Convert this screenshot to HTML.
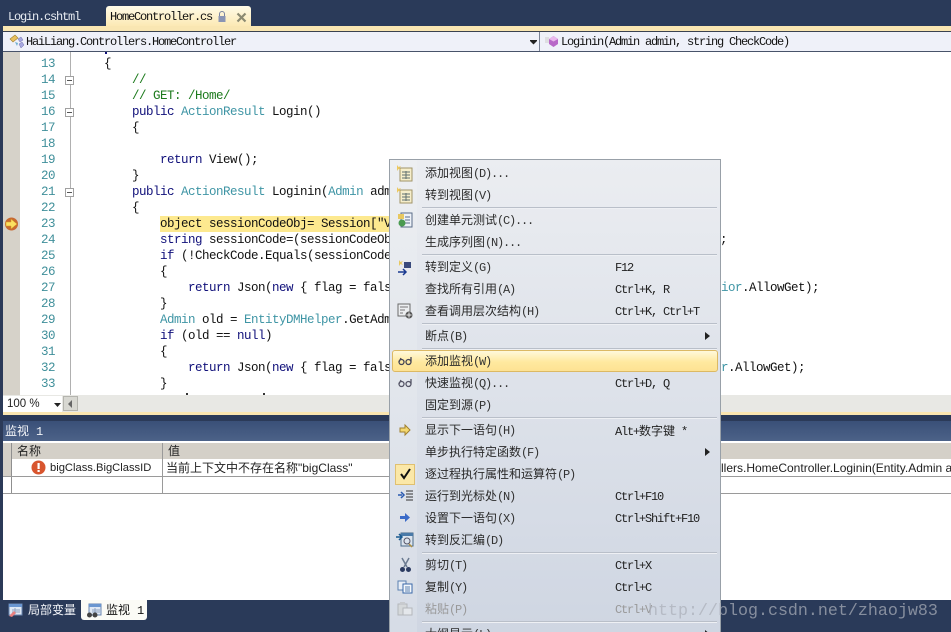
<!DOCTYPE html>
<html style="height:632px;overflow:hidden"><head><meta charset="utf-8"><style>
html,body{margin:0;padding:0}
body{width:951px;height:632px;overflow:hidden;position:relative;background:#2b3a58;font-family:"Liberation Sans","Noto Sans CJK SC",sans-serif}
div,span.a{position:absolute}
.m{font-family:"Liberation Mono","Noto Sans CJK SC",monospace;font-size:12px;letter-spacing:-1.2px;line-height:16px;color:#111;white-space:pre}
.c{position:absolute;font-family:"Liberation Mono",monospace;font-size:12.5px;letter-spacing:-.5px;line-height:16px;height:16px;white-space:pre;color:#111}
.n{position:absolute;left:22px;width:33px;text-align:right;font-family:"Liberation Mono",monospace;font-size:12.5px;letter-spacing:-.5px;line-height:16px;height:16px;color:#3f8f9a}
.k{color:#10107a}.t{color:#3f95a5}.g{color:#1c7a1c}.s{color:#8a2020}
.f{position:absolute;left:65px;width:7px;height:7px;border:1px solid #a0a0a0;background:#fff}
.f:after{content:"";position:absolute;left:1px;top:3px;width:5px;height:1px;background:#555}
.i{position:absolute;left:425px;font-size:12px;line-height:16px;height:16px;color:#2a2a2a;white-space:pre;font-family:"Noto Sans CJK SC","Liberation Sans",sans-serif}
.i b{font:12px/16px "Liberation Mono",monospace;letter-spacing:-1.2px;color:#333}
.sc{position:absolute;left:615px;margin-top:1px;font-family:"Liberation Mono",monospace;font-size:12px;letter-spacing:-1.2px;line-height:16px;height:16px;color:#222;white-space:pre}
.sc i{font:12px/16px "Noto Sans CJK SC",sans-serif;letter-spacing:0}
.sp{position:absolute;left:422px;width:295px;height:1px;background:#b9bfc9;border-bottom:1px solid #eef0f4}
svg{position:absolute;overflow:visible}
</style></head><body>

<!-- tabs -->
<div style="left:0;top:0;width:951px;height:26px;background:#2a3a59"></div>
<div class="m" style="left:8px;top:9px;color:#e8ecf2">Login.cshtml</div>
<div style="left:106px;top:6px;width:145px;height:20px;background:linear-gradient(#fffbe8,#fce9b4);border-radius:3px 3px 0 0"></div>
<div class="m" style="left:110px;top:9px">HomeController.cs</div>
<svg style="left:217px;top:11px" width="10" height="11"><path d="M2.500 5V3a2.500 2.500 0 0 1 5 0v2" fill="none" stroke="#7a84a0"/><rect x="1.500" y="5" width="7" height="6" fill="#8a94b4"/></svg>
<svg style="left:236px;top:12px" width="11" height="11"><path d="M1.500 1.500L9.500 9.500M9.500 1.500L1.500 9.500" stroke="#8c8a72" stroke-width="2.200"/></svg>
<div style="left:3px;top:26px;width:948px;height:5px;background:#f9e6b2"></div>

<!-- nav bar -->
<div style="left:3px;top:31px;width:948px;height:21px;background:#eff1f9;border-top:1px solid #3a4250;border-bottom:1px solid #48536a;box-sizing:border-box"></div>
<div style="left:539px;top:32px;width:1px;height:19px;background:#7a8294"></div>
<svg style="left:9px;top:34px" width="16" height="16"><path d="M1 5L6 1l3 3-5 4z" fill="#e8c060" stroke="#a08030" stroke-width=".6"/><path d="M9 5l3-2 2 3-3 2zM10 10l3-2 2 3-3 3z" fill="#a8a8e0" stroke="#7070b0" stroke-width=".5"/><path d="M6 8l3 1-1 3z" fill="#70b0d0"/></svg>
<div class="m" style="left:26px;top:34px">HaiLiang.Controllers.HomeController</div>
<svg style="left:530px;top:40px" width="7" height="5"><path d="M0 0h7v1L3.500 4.500 0 1z" fill="#222"/></svg>
<svg style="left:544px;top:35px" width="15" height="13"><path d="M1 3h4M1 5h4M1 7h4" stroke="#ccc" stroke-width="1"/><path d="M9.500 1L14 4v5l-4.500 3L5 9V4z" fill="#b868c8"/><path d="M9.500 1L14 4 9.500 6.500 5 4z" fill="#e8b8ec"/></svg>
<div class="m" style="left:561px;top:34px">Loginin(Admin admin, string CheckCode)</div>

<!-- editor -->
<div style="left:3px;top:52px;width:948px;height:343px;background:#fff"></div>
<div style="left:3px;top:52px;width:17px;height:343px;background:#d6d2c9"></div>
<div style="left:70px;top:52px;width:1px;height:343px;background:#b0b0b0"></div>
<div style="left:160px;top:216px;width:240px;height:16px;background:#fde98f"></div>
<div style="left:105px;top:52px;width:2px;height:2px;background:#10107a"></div>

<div class="f" style="top:76px"></div><div class="f" style="top:108px"></div><div class="f" style="top:188px"></div>

<div class="n" style="top:56px">13</div><div class="n" style="top:72px">14</div><div class="n" style="top:88px">15</div><div class="n" style="top:104px">16</div><div class="n" style="top:120px">17</div><div class="n" style="top:136px">18</div><div class="n" style="top:152px">19</div><div class="n" style="top:168px">20</div><div class="n" style="top:184px">21</div><div class="n" style="top:200px">22</div><div class="n" style="top:216px">23</div><div class="n" style="top:232px">24</div><div class="n" style="top:248px">25</div><div class="n" style="top:264px">26</div><div class="n" style="top:280px">27</div><div class="n" style="top:296px">28</div><div class="n" style="top:312px">29</div><div class="n" style="top:328px">30</div><div class="n" style="top:344px">31</div><div class="n" style="top:360px">32</div><div class="n" style="top:376px">33</div>

<div class="c" style="left:104px;top:56px">{</div>
<div class="c g" style="left:132px;top:72px">//</div>
<div class="c g" style="left:132px;top:88px">// GET: /Home/</div>
<div class="c" style="left:132px;top:104px"><span class="k">public</span> <span class="t">ActionResult</span> Login()</div>
<div class="c" style="left:132px;top:120px">{</div>
<div class="c" style="left:160px;top:152px"><span class="k">return</span> View();</div>
<div class="c" style="left:132px;top:168px">}</div>
<div class="c" style="left:132px;top:184px"><span class="k">public</span> <span class="t">ActionResult</span> Loginin(<span class="t">Admin</span> admin, <span class="k">string</span> CheckCode)</div>
<div class="c" style="left:132px;top:200px">{</div>
<div class="c" style="left:160px;top:216px">object sessionCodeObj= Session["ValidateCode"];</div>
<div class="c" style="left:160px;top:232px"><span class="k">string</span> sessionCode=(sessionCodeObj == <span class="k">null</span>)</div>
<div class="c" style="left:720px;top:232px">;</div>
<div class="c" style="left:160px;top:248px"><span class="k">if</span> (!CheckCode.Equals(sessionCode))</div>
<div class="c" style="left:160px;top:264px">{</div>
<div class="c" style="left:188px;top:280px"><span class="k">return</span> Json(<span class="k">new</span> { flag = false });</div>
<div class="c t" style="left:721px;top:280px">ior<span style="color:#111">.AllowGet);</span></div>
<div class="c" style="left:160px;top:296px">}</div>
<div class="c" style="left:160px;top:312px"><span class="t">Admin</span> old = <span class="t">EntityDMHelper</span>.GetAdmin();</div>
<div class="c" style="left:160px;top:328px"><span class="k">if</span> (old == <span class="k">null</span>)</div>
<div class="c" style="left:160px;top:344px">{</div>
<div class="c" style="left:188px;top:360px"><span class="k">return</span> Json(<span class="k">new</span> { flag = false });</div>
<div class="c t" style="left:721px;top:360px">r<span style="color:#111">.AllowGet);</span></div>
<div class="c" style="left:160px;top:376px">}</div>
<div style="left:186px;top:393px;width:2px;height:2px;background:#333"></div>
<div style="left:263px;top:393px;width:2px;height:2px;background:#333"></div>

<svg style="left:4px;top:217px" width="15" height="14"><circle cx="7.500" cy="7" r="6.500" fill="#c86a30"/><path d="M2 5h5V2l6 5-6 5V9H2z" fill="#fce060" stroke="#d09a20" stroke-width=".5"/></svg>

<!-- zoom bar -->
<div style="left:3px;top:395px;width:948px;height:17px;background:#e8e8e4"></div>
<div style="left:3px;top:396px;width:59px;height:16px;background:#fff"></div>
<div style="left:7px;top:396px;font:11.500px/16px 'Liberation Sans',sans-serif;color:#222">100 %</div>
<svg style="left:54px;top:403px" width="7" height="4"><path d="M0 0h7L3.500 4z" fill="#222"/></svg>
<div style="left:63px;top:396px;width:15px;height:15px;background:#d8d8d2;border:1px solid #b4b4ae;box-sizing:border-box"></div>
<svg style="left:68px;top:400px" width="5" height="8"><path d="M4 0v8L0 4z" fill="#666"/></svg>
<div style="left:3px;top:412px;width:948px;height:3px;background:#fbe6b0"></div>

<!-- watch panel -->
<div style="left:3px;top:421px;width:948px;height:20px;background:linear-gradient(#3a5078,#4c6288)"></div>
<div style="left:5px;top:423px;font:12px/16px 'Noto Sans CJK SC',sans-serif;color:#f2f4f8;white-space:pre">监视<span style="font:12px/16px 'Liberation Mono',monospace;margin-left:7px">1</span></div>
<div style="left:3px;top:441px;width:948px;height:159px;background:#fff"></div>
<div style="left:3px;top:443px;width:948px;height:16px;background:#d4d0c8"></div>
<div style="left:3px;top:459px;width:8px;height:17px;background:#d4d0c8"></div>
<div style="left:11px;top:443px;width:1px;height:50px;background:#8f8f8f"></div>
<div style="left:162px;top:443px;width:1px;height:50px;background:#9a9a9a"></div>
<div style="left:3px;top:476px;width:948px;height:1px;background:#9a9a9a"></div>
<div style="left:3px;top:493px;width:948px;height:1px;background:#9a9a9a"></div>
<div style="left:17px;top:443px;font:12px/16px 'Noto Sans CJK SC',sans-serif;color:#222">名称</div>
<div style="left:168px;top:443px;font:12px/16px 'Noto Sans CJK SC',sans-serif;color:#222">值</div>
<svg style="left:31px;top:460px" width="15" height="15"><circle cx="7.500" cy="7.500" r="7" fill="#d8552e"/><rect x="6.500" y="3" width="2.200" height="6" fill="#fff"/><rect x="6.500" y="10" width="2.200" height="2" fill="#fff"/></svg>
<div style="left:50px;top:460px;font-size:11.200px;line-height:16px;color:#222;white-space:pre">bigClass.BigClassID</div>
<div style="left:166px;top:460px;font-size:12px;line-height:16px;color:#222;white-space:pre;font-family:'Liberation Sans','Noto Sans CJK SC',sans-serif">当前上下文中不存在名称"bigClass"</div>
<div style="left:721px;top:460px;width:230px;overflow:hidden;font-size:12px;line-height:16px;color:#222;white-space:pre">llers.HomeController.Loginin(Entity.Admin a</div>

<!-- bottom tabs -->
<div style="left:0;top:600px;width:951px;height:32px;background:#2a3a59"></div>
<svg style="left:8px;top:603px" width="16" height="15"><rect x="1" y="1" width="13" height="11" fill="#dfe8f4" stroke="#6a86b0"/><rect x="1" y="1" width="13" height="3" fill="#6a96d0"/><path d="M4 7h8M4 9h8M7 5v6" stroke="#90a4c0"/><path d="M1 13l5-5 2 2-4 4z" fill="#e88080"/></svg>
<div style="left:28px;top:602px;font:12px/16px 'Noto Sans CJK SC',sans-serif;color:#f4f6fa">局部变量</div>
<div style="left:81px;top:600px;width:66px;height:20px;background:#fbfbf6;border-radius:0 0 3px 3px"></div>
<svg style="left:86px;top:603px" width="17" height="15"><rect x="3" y="1" width="12" height="11" fill="#dfe8f4" stroke="#6a86b0"/><rect x="3" y="1" width="12" height="3" fill="#6a96d0"/><path d="M6 7h8M6 9h8M9 5v6" stroke="#90a4c0"/><circle cx="3.500" cy="12" r="2.500" fill="#444"/><circle cx="9" cy="12" r="2.500" fill="#444"/></svg>
<div style="left:106px;top:602px;font:12px/16px 'Noto Sans CJK SC',sans-serif;color:#111;white-space:pre">监视<span style="font:12px/16px 'Liberation Mono',monospace;margin-left:7px">1</span></div>

<!-- context menu -->
<div style="left:389px;top:159px;width:332px;height:473px;box-sizing:border-box;border:1px solid #98a0a8;border-bottom:none;background:linear-gradient(#ebedf1,#cfd6e2)"></div>
<div style="left:390px;top:160px;width:27px;height:472px;background:linear-gradient(#edeff2,#d6dce6)"></div>

<div class="sp" style="top:207px"></div>
<div class="sp" style="top:254px"></div>
<div class="sp" style="top:323px"></div>
<div class="sp" style="top:348px"></div>
<div class="sp" style="top:417px"></div>
<div class="sp" style="top:552px"></div>
<div class="sp" style="top:621px"></div>

<div style="left:392px;top:350px;width:326px;height:22px;box-sizing:border-box;border:1px solid #dcb964;border-radius:3px;background:linear-gradient(#fff9dc,#ffe99f 55%,#fde293)"></div>
<div style="left:395px;top:464px;width:20px;height:21px;box-sizing:border-box;border:1px solid #e0c070;background:#fbe8a8"></div>
<svg style="left:400px;top:468px" width="11" height="12"><path d="M1 6l3 4 6-9" fill="none" stroke="#111" stroke-width="2"/></svg>

<div class="i" style="top:165px">添加视图<b>(D)...</b></div>
<div class="i" style="top:187px">转到视图<b>(V)</b></div>
<div class="i" style="top:212px">创建单元测试<b>(C)...</b></div>
<div class="i" style="top:234px">生成序列图<b>(N)...</b></div>
<div class="i" style="top:259px">转到定义<b>(G)</b></div><div class="sc" style="top:259px">F12</div>
<div class="i" style="top:281px">查找所有引用<b>(A)</b></div><div class="sc" style="top:281px">Ctrl+K, R</div>
<div class="i" style="top:303px">查看调用层次结构<b>(H)</b></div><div class="sc" style="top:303px">Ctrl+K, Ctrl+T</div>
<div class="i" style="top:328px">断点<b>(B)</b></div>
<div class="i" style="top:353px">添加监视<b>(W)</b></div>
<div class="i" style="top:375px">快速监视<b>(Q)...</b></div><div class="sc" style="top:375px">Ctrl+D, Q</div>
<div class="i" style="top:397px">固定到源<b>(P)</b></div>
<div class="i" style="top:422px">显示下一语句<b>(H)</b></div><div class="sc" style="top:422px">Alt+<i style="font-style:normal">数字键</i> *</div>
<div class="i" style="top:444px">单步执行特定函数<b>(F)</b></div>
<div class="i" style="top:466px">逐过程执行属性和运算符<b>(P)</b></div>
<div class="i" style="top:488px">运行到光标处<b>(N)</b></div><div class="sc" style="top:488px">Ctrl+F10</div>
<div class="i" style="top:510px">设置下一语句<b>(X)</b></div><div class="sc" style="top:510px">Ctrl+Shift+F10</div>
<div class="i" style="top:532px">转到反汇编<b>(D)</b></div>
<div class="i" style="top:557px">剪切<b>(T)</b></div><div class="sc" style="top:557px">Ctrl+X</div>
<div class="i" style="top:579px">复制<b>(Y)</b></div><div class="sc" style="top:579px">Ctrl+C</div>
<div class="i" style="top:601px;color:#999">粘贴<b style="color:#999">(P)</b></div><div class="sc" style="top:601px;color:#999">Ctrl+V</div>
<div class="i" style="top:626px">大纲显示<b>(L)</b></div>

<svg style="left:705px;top:332px" width="5" height="8"><path d="M0 0l5 4-5 4z" fill="#222"/></svg>
<svg style="left:705px;top:448px" width="5" height="8"><path d="M0 0l5 4-5 4z" fill="#222"/></svg>
<svg style="left:705px;top:630px" width="5" height="8"><path d="M0 0l5 4-5 4z" fill="#222"/></svg>

<!-- menu icons -->
<svg style="left:396px;top:165px" width="18" height="17"><rect x="4" y="3" width="12" height="13" fill="#f6eecb" stroke="#a09468"/><path d="M6 7h8M6 10h8M6 13h8M10 6v8" stroke="#607070"/><path d="M1 0l1.500 2L5 1 3.500 3 5 5 2.500 4 1 6z" fill="#ecc860"/></svg>
<svg style="left:396px;top:187px" width="18" height="17"><rect x="4" y="3" width="12" height="13" fill="#f6eecb" stroke="#a09468"/><path d="M6 7h8M6 10h8M6 13h8M10 6v8" stroke="#607070"/><path d="M1 0l1.500 2L5 1 3.500 3 5 5 2.500 4 1 6z" fill="#ecc860"/></svg>
<svg style="left:397px;top:212px" width="16" height="16"><rect x="4" y="1" width="11" height="14" fill="#eef2f8" stroke="#5a6c88"/><path d="M8 5h5M8 8h5M8 11h5" stroke="#5a6c88"/><rect x="1" y="2" width="6" height="5" fill="#e8c860"/><circle cx="5" cy="11" r="3.500" fill="#4a9a50"/></svg>
<svg style="left:397px;top:259px" width="16" height="16"><path d="M2 1l1.500 2L6 2 4.500 4 6 6 3.500 5 2 7z" fill="#e8c860"/><rect x="7" y="3" width="7" height="6" fill="#3a4a7c"/><path d="M1 13h8M6 10l3 3-3 3" fill="none" stroke="#1a3a90" stroke-width="1.500"/></svg>
<svg style="left:397px;top:303px" width="16" height="16"><rect x="1" y="1" width="12" height="12" fill="#eceef0" stroke="#6a6a6a"/><path d="M3 4h8M3 7h5M3 10h3" stroke="#777"/><circle cx="12" cy="12" r="3.500" fill="#555"/><path d="M12 9.500v5M9.500 12h5" stroke="#eee"/></svg>
<svg style="left:398px;top:357px" width="14" height="8"><path d="M1 5a2.500 2.500 0 1 0 5 0 2.500 2.500 0 1 0-5 0M8 5a2.500 2.500 0 1 0 5 0 2.500 2.500 0 1 0-5 0M1 5L3 1M13 5V0" fill="none" stroke="#445" stroke-width="1.300"/></svg>
<svg style="left:398px;top:379px" width="14" height="8"><path d="M1 5a2.500 2.500 0 1 0 5 0 2.500 2.500 0 1 0-5 0M8 5a2.500 2.500 0 1 0 5 0 2.500 2.500 0 1 0-5 0M1 5L3 1M13 5V0" fill="none" stroke="#556" stroke-width="1.300"/></svg>
<svg style="left:399px;top:424px" width="12" height="12"><path d="M1 4h5V1l5 5-5 5V8H1z" fill="#f4d870" stroke="#a08030"/></svg>
<svg style="left:398px;top:490px" width="15" height="11"><path d="M0 5h4M3 2l3 3-3 3" fill="none" stroke="#2a5ab0" stroke-width="1.500"/><path d="M8 1h7M8 4h7M8 7h7M8 10h7" stroke="#333"/></svg>
<svg style="left:400px;top:512px" width="11" height="11"><path d="M0 4h5V1l5 4.500L5 10V7H0z" fill="#3a6ac8"/></svg>
<svg style="left:396px;top:531px" width="18" height="18"><rect x="5" y="2" width="12" height="13" fill="#dbe4ee" stroke="#4a6a88"/><rect x="5" y="2" width="12" height="3" fill="#4a7aa8"/><path d="M0 6h6M3 3l3 3-3 3" fill="none" stroke="#1a5a90" stroke-width="1.500"/><circle cx="11" cy="10" r="3" fill="none" stroke="#556"/><path d="M13 13l3 3" stroke="#b09040" stroke-width="1.500"/></svg>
<svg style="left:399px;top:558px" width="13" height="15"><path d="M3 0l5 9M10 0L5 9" stroke="#6a7a90" stroke-width="1.500"/><circle cx="3.500" cy="11.500" r="2.500" fill="#2a3a60"/><circle cx="9.500" cy="11.500" r="2.500" fill="#2a3a60"/></svg>
<svg style="left:397px;top:580px" width="16" height="14"><rect x="1" y="1" width="8" height="9" fill="#e8eef6" stroke="#5a80b0"/><rect x="6" y="4" width="9" height="9" fill="#f4f8fc" stroke="#3a68a8"/><path d="M8 7h5M8 9h5M8 11h5" stroke="#5a80b0"/></svg>
<svg style="left:397px;top:602px;opacity:.55" width="16" height="14"><rect x="1" y="2" width="9" height="11" fill="#d4d4d0" stroke="#999"/><rect x="3" y="0" width="5" height="3" fill="#bbb"/><rect x="6" y="6" width="9" height="7" fill="#f0f0f0" stroke="#999"/></svg>

<!-- watermark -->
<div style="left:648px;top:602px;font:16.670px/20px 'Liberation Mono',monospace;color:rgba(170,175,185,.72);white-space:pre">http://blog.csdn.net/zhaojw83</div>
</body></html>
